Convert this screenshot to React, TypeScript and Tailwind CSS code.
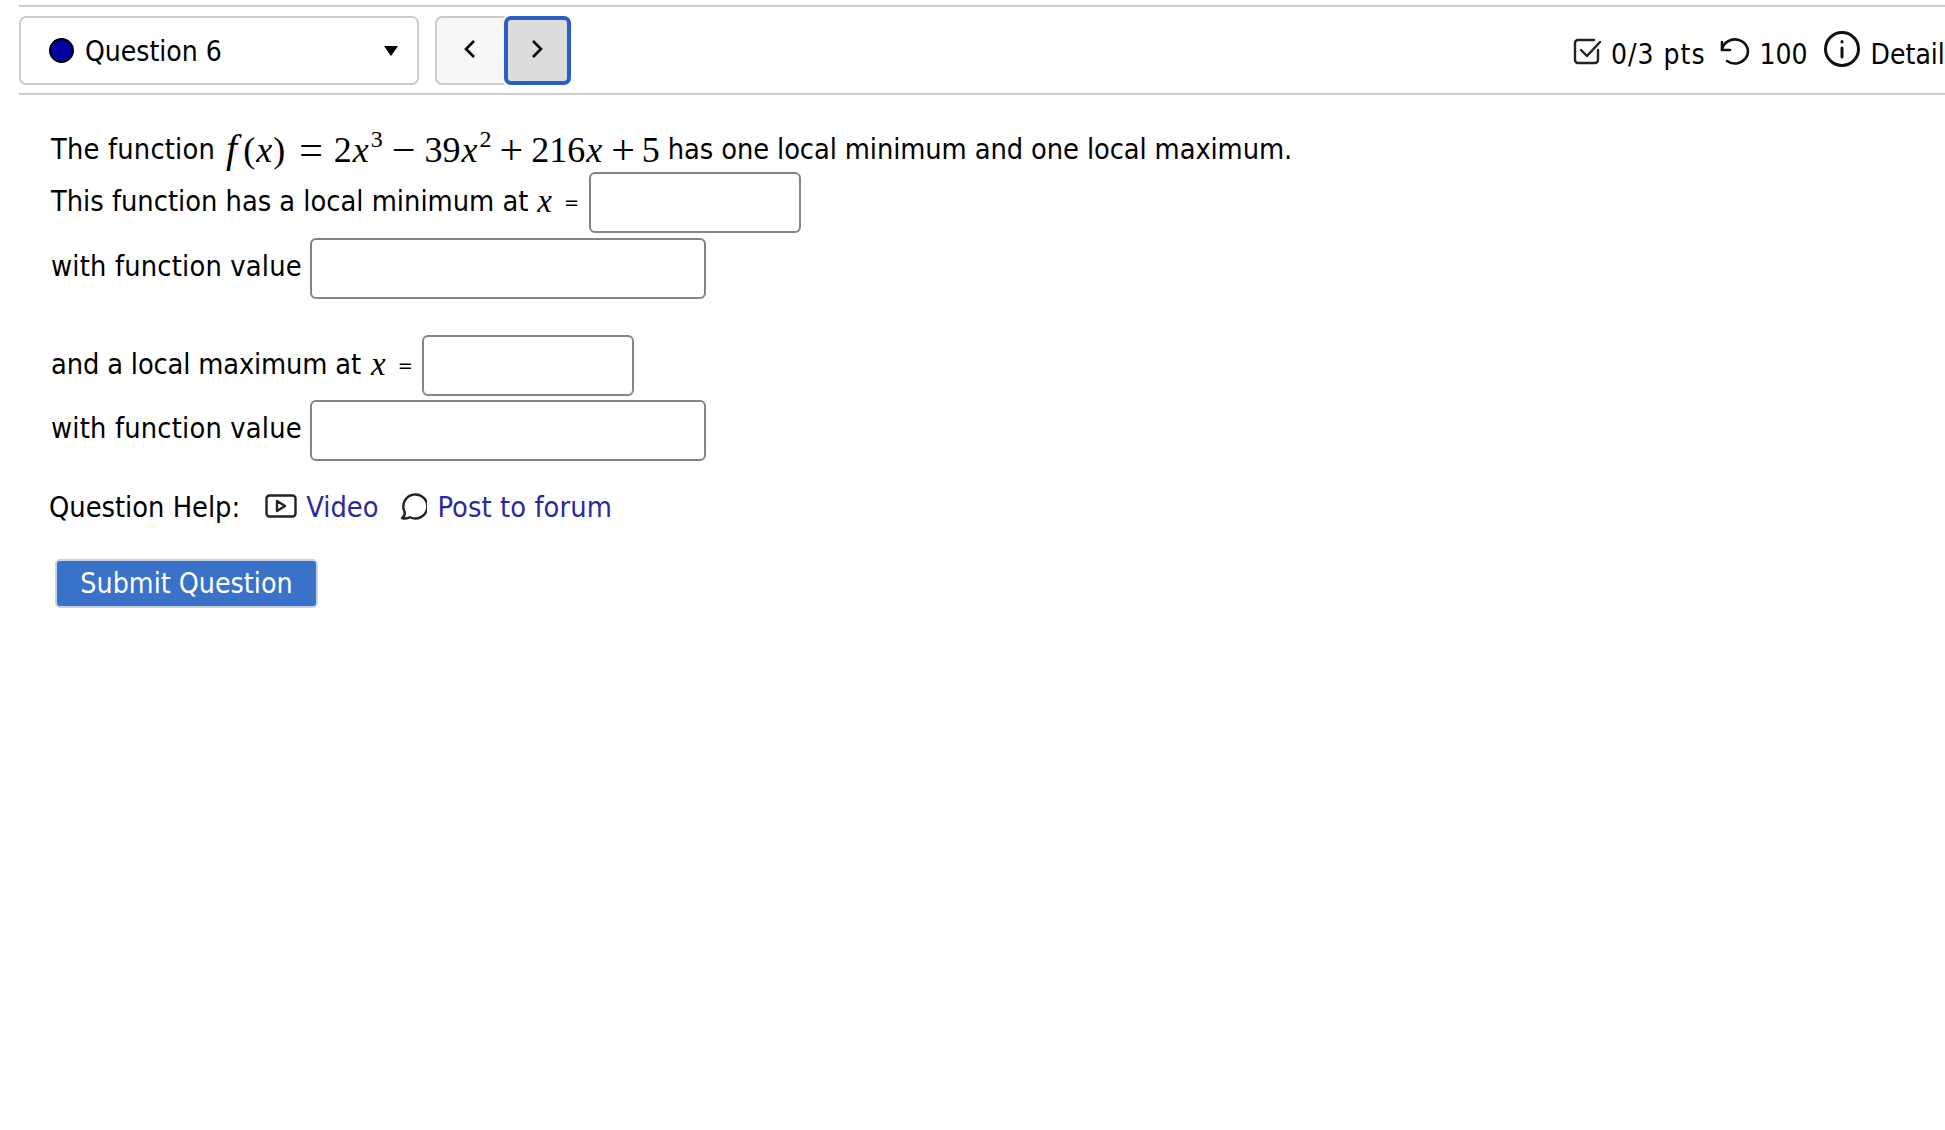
import React from "react";

const MATH = "font-['Liberation_Serif',serif]";

function X({ left = "ml-[9px]" }: { left?: string }) {
  return <i className={`${MATH} ${left} mr-[12px] text-[33px] leading-none mb-[2px]`}>x</i>;
}

function Eq() {
  return <span className="text-[20px] leading-none mb-[2px]">=</span>;
}

function Answer({ w, left = "ml-[9px]" }: { w: string; left?: string }) {
  return <input type="text" className={`${w} ${left} h-[61px] rounded-[6px] border-2 border-[#858585] bg-white`} />;
}

function Formula() {
  const op = "text-[42px] leading-none translate-y-[2px]";
  const v = "text-[36px] leading-none mx-[1px]";
  const sup = "relative text-[24px] leading-none -top-[15px] ml-[1px]";
  return (
    <span className={`${MATH} inline-flex items-baseline text-[36px] leading-none ml-[11px] mr-[8px] mb-[5px] text-black`}>
      <i className="text-[40px] leading-none">f</i><span className="ml-[6px]">(</span><i className={v}>x</i><span>)</span>
      <span className={`${op} ml-[14px] mr-[11px]`}>=</span>
      <span>2</span><i className={v}>x</i><span className={sup}>3</span>
      <span className={`${op} mx-[9px]`}>−</span>
      <span>39</span><i className={v}>x</i><span className={sup}>2</span>
      <span className={`${op} mx-[8px]`}>+</span>
      <span>216</span><i className={v}>x</i>
      <span className={`${op} ml-[8px] mr-[7px]`}>+</span>
      <span>5</span>
    </span>
  );
}

export default function App() {
  return (
    <div className="h-[1130px] w-full overflow-hidden bg-white text-black font-['DejaVu_Sans_Condensed','DejaVu_Sans',sans-serif] text-[28.7px]">
      {/* top bar */}
      <div className="ml-[19px] mt-[5px] flex h-[90px] items-center border-y-2 border-[#cccccc] whitespace-nowrap text-[28px]">
        <div className="flex h-[69px] w-[400px] items-center rounded-[7px] border-2 border-[#cccccc] pl-[28px] pr-[19px]">
          <span className="h-[25px] w-[25px] rounded-full border-2 border-black bg-[#0000a5]" />
          <span className="ml-[11px] mt-[4px] flex-1">Question 6</span>
          <span className="mt-[2px] h-0 w-0 border-x-[7px] border-t-[10px] border-x-transparent border-t-black" />
        </div>
        <div className="ml-[16px] flex h-[69px]">
          <button className="flex w-[69px] items-center justify-center rounded-l-[7px] border-2 border-r-0 border-[#cccccc] bg-[#f8f8f8]">
            <svg width="16" height="22" viewBox="0 0 16 22" fill="none" stroke="black" strokeWidth="2.6" className="-mt-[2px] -ml-[2px]"><path d="M12 3 4 11l8 8" /></svg>
          </button>
          <button className="flex w-[67px] items-center justify-center rounded-[7px] border-[4px] border-[#2a5ec6] bg-[#dcdcdc]">
            <svg width="16" height="22" viewBox="0 0 16 22" fill="none" stroke="black" strokeWidth="2.6" className="-mt-[2px] -ml-[1px]"><path d="m4 3 8 8-8 8" /></svg>
          </button>
        </div>
        <div className="ml-auto flex w-[373px] shrink-0 items-center overflow-hidden">
          <svg width="30" height="30" viewBox="0 0 30 30" fill="none" stroke="#222" strokeWidth="2.4" strokeLinecap="round" strokeLinejoin="round" className="mt-[2px] shrink-0">
            <path d="M26 14v10a3 3 0 0 1-3 3H6a3 3 0 0 1-3-3V7a3 3 0 0 1 3-3h16" />
            <path d="m9 14 6 6L28 6" />
          </svg>
          <span className="ml-[9px] mt-[9px] tracking-[1px]">0/3 pts</span>
          <svg width="32" height="30" viewBox="0 0 32 30" fill="none" stroke="#111" strokeWidth="2.6" strokeLinecap="round" strokeLinejoin="round" className="ml-[13px] mt-[4px] shrink-0">
            <path d="M3 5v8h8" />
            <path d="M3 13A13 12 0 1 1 8 24" />
          </svg>
          <span className="ml-[9px] mt-[9px]">100</span>
          <svg width="38" height="38" viewBox="0 0 38 38" fill="none" stroke="#111" strokeWidth="3" strokeLinecap="round" className="ml-[15px] -mt-[2px] shrink-0">
            <circle cx="19" cy="19" r="16.5" />
            <path d="M19 18v9" />
            <path d="M19 11.5v.5" />
          </svg>
          <span className="ml-[10px] mt-[9px]">Details</span>
        </div>
      </div>

      {/* question body */}
      <div className="pl-[51px]">
        <div className="mt-[33px] flex h-[44px] items-center whitespace-nowrap">
          <span className="tracking-[0.2px]">The function</span>
          <Formula />
          <span className="tracking-[-0.1px]">has one local minimum and one local maximum.</span>
        </div>
        <div className="flex h-[61px] items-center whitespace-nowrap">
          <span className="mb-[2px]">This function has a local minimum at</span><X /><Eq /><Answer w="w-[212px]" left="ml-[10px]" />
        </div>
        <div className="mt-[5px] flex h-[61px] items-center whitespace-nowrap">
          <span className="mb-[3px] tracking-[0.2px]">with function value</span><Answer w="w-[396px]" left="ml-[8px]" />
        </div>
        <div className="mt-[36px] flex h-[61px] items-center whitespace-nowrap">
          <span className="mb-[2px] tracking-[-0.15px]">and a local maximum at</span><X left="ml-[10px]" /><Eq /><Answer w="w-[212px]" />
        </div>
        <div className="mt-[4px] flex h-[61px] items-center whitespace-nowrap">
          <span className="mb-[3px] tracking-[0.2px]">with function value</span><Answer w="w-[396px]" left="ml-[8px]" />
        </div>

        <div className="mt-[27px] -ml-[2px] flex h-[40px] items-center whitespace-nowrap">
          <span>Question Help:</span>
          <svg width="32" height="24" viewBox="0 0 32 24" fill="none" stroke="#222" strokeWidth="2.4" strokeLinejoin="round" className="ml-[25px] -mt-[4px] shrink-0">
            <rect x="1.5" y="1.5" width="29" height="21" rx="3" />
            <path d="m12 7 8 5-8 5z" />
          </svg>
          <a className="ml-[9px] text-[#2a2aa0]">Video</a>
          <svg width="28" height="28" viewBox="0 0 28 28" fill="none" stroke="#222" strokeWidth="2.4" strokeLinejoin="round" className="ml-[21px] -mt-[4px] shrink-0">
            <path d="M3 26c2-1 3-3 2.7-6A12 12 0 1 1 11 25.2 10 10 0 0 1 3 26z" />
          </svg>
          <a className="ml-[10px] text-[#2a2aa0] tracking-[0.1px]">Post to forum</a>
        </div>

        <button className="ml-[4px] mt-[31px] block h-[49px] w-[263px] rounded-[5px] border-2 border-[#c9d3e3] bg-[#3a71c9] pt-[2px] text-center text-[28.3px] text-white">
          Submit Question
        </button>
      </div>
    </div>
  );
}
